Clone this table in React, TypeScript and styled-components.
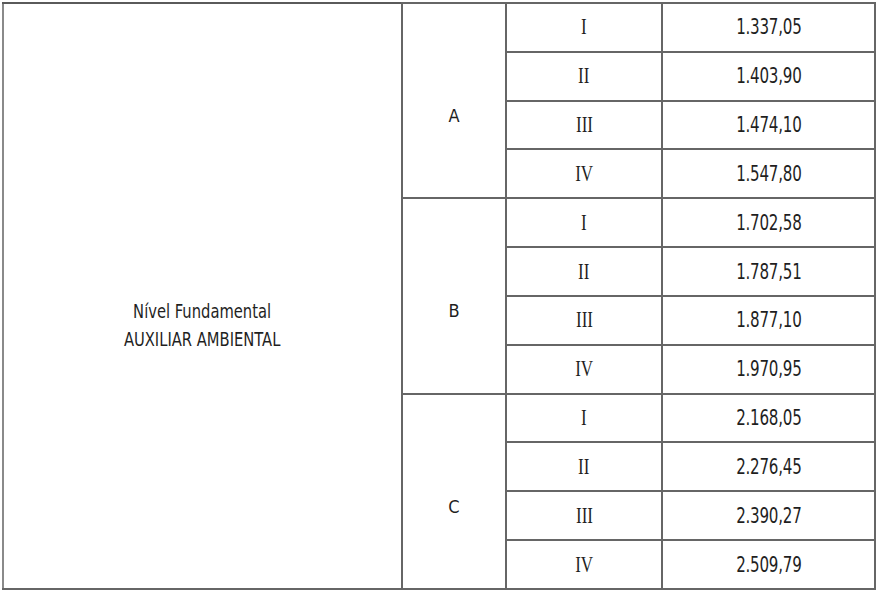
import React from "react";
import styled, { createGlobalStyle } from "styled-components";

type Level = { letter: string; rows: { grade: string; value: string }[] };

const levels: Level[] = [
  {
    letter: "A",
    rows: [
      { grade: "I", value: "1.337,05" },
      { grade: "II", value: "1.403,90" },
      { grade: "III", value: "1.474,10" },
      { grade: "IV", value: "1.547,80" },
    ],
  },
  {
    letter: "B",
    rows: [
      { grade: "I", value: "1.702,58" },
      { grade: "II", value: "1.787,51" },
      { grade: "III", value: "1.877,10" },
      { grade: "IV", value: "1.970,95" },
    ],
  },
  {
    letter: "C",
    rows: [
      { grade: "I", value: "2.168,05" },
      { grade: "II", value: "2.276,45" },
      { grade: "III", value: "2.390,27" },
      { grade: "IV", value: "2.509,79" },
    ],
  },
];

const App = () => {
  return (
    <Page>
      <GlobalStyle />
      <Table>
        <colgroup>
          <col style={{ width: 399 }} />
          <col style={{ width: 104 }} />
          <col style={{ width: 156 }} />
          <col style={{ width: 213 }} />
        </colgroup>
        <tbody>
          {levels.map((level, li) =>
            level.rows.map((row, ri) => (
              <Row key={`${level.letter}-${row.grade}`}>
                {li === 0 && ri === 0 && (
                  <LabelCell rowSpan={12}>
                    <Squeeze $scale={0.84}>
                      Nível Fundamental
                      <br />
                      AUXILIAR AMBIENTAL
                    </Squeeze>
                  </LabelCell>
                )}
                {ri === 0 && <LetterCell rowSpan={4}>{level.letter}</LetterCell>}
                <GradeCell>
                  <Squeeze $scale={0.74}>{row.grade}</Squeeze>
                </GradeCell>
                <ValueCell>
                  <Squeeze $scale={0.8}>{row.value}</Squeeze>
                </ValueCell>
              </Row>
            ))
          )}
        </tbody>
      </Table>
    </Page>
  );
};

export default App;

const GlobalStyle = createGlobalStyle`
  html, body {
    margin: 0;
    padding: 0;
    background: #ffffff;
    overflow: hidden;
  }
`;

const Page = styled.div`
  padding: 2px 0 0 2px;
  width: 877px;
  height: 590px;
  box-sizing: border-box;
`;

const Table = styled.table`
  border-collapse: collapse;
  table-layout: fixed;
  width: 872px;
  font-family: "DejaVu Sans Condensed", "Liberation Sans Narrow", "DejaVu Sans", sans-serif;
  color: #1f1f1f;
`;

const Row = styled.tr`
  height: 48.83px;
`;

const Cell = styled.td`
  border: 2px solid #666666;
  text-align: center;
  vertical-align: middle;
  padding: 0;
  box-sizing: border-box;
`;

const LabelCell = styled(Cell)`
  border-left-color: #8a8a8a;
  border-top-color: #5a5a5a;
  padding-top: 60px;
  font-size: 19.5px;
  line-height: 28px;
`;

const LetterCell = styled(Cell)`
  padding-top: 30px;
  font-size: 18px;
`;

const GradeCell = styled(Cell)`
  font-family: "Liberation Serif", "DejaVu Serif", serif;
  font-size: 23px;
`;

const ValueCell = styled(Cell)`
  font-size: 21px;
  letter-spacing: -0.3px;
`;

const Squeeze = styled.span<{ $scale: number }>`
  display: inline-block;
  transform: scaleX(${(p) => p.$scale});
`;
